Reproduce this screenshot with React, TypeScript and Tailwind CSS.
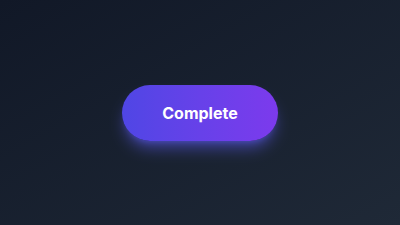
export default function App() {
  return (
    <div className="flex h-[225px] w-[400px] items-center justify-center bg-gradient-to-br from-[#111827] to-[#1f2937]">
      <button className="rounded-full bg-gradient-to-r from-[#4f46e5] to-[#7c3aed] px-10 py-4 text-base leading-6 font-bold text-white shadow-lg shadow-indigo-500/50 [font-family:Inter,'Liberation_Sans',sans-serif]">
        Complete
      </button>
    </div>
  );
}
